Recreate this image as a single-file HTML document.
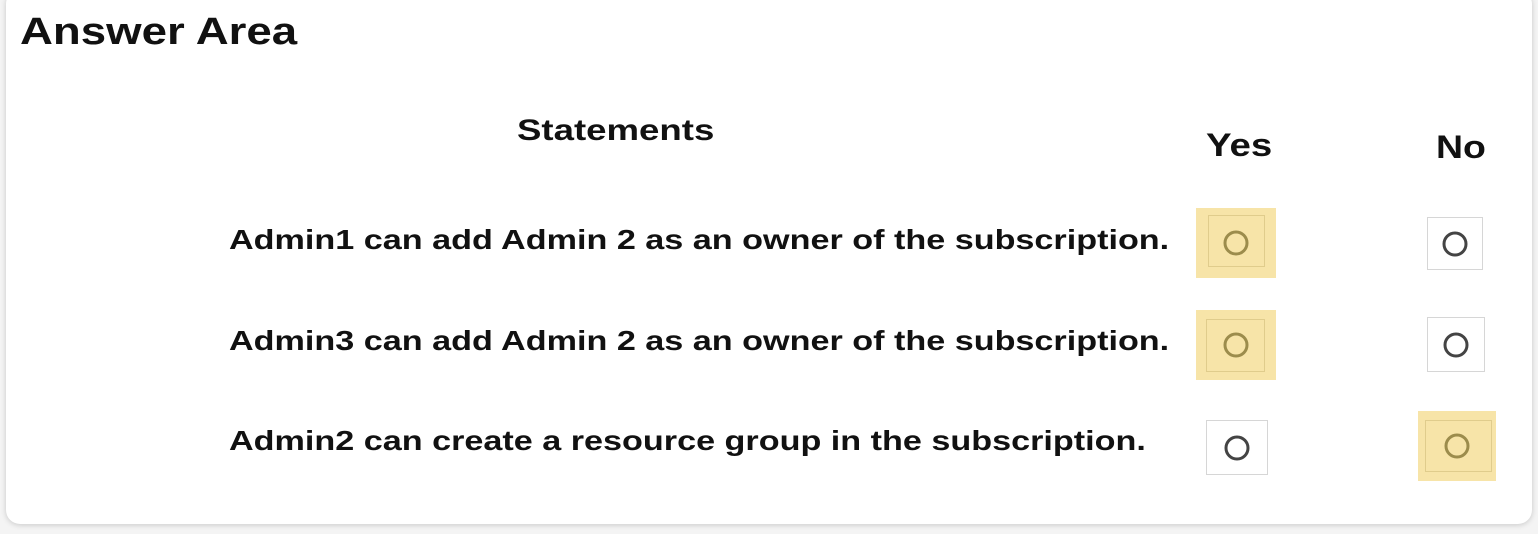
<!DOCTYPE html>
<html><head><style>
body{margin:0;width:1538px;height:534px;background:#f4f4f4;font-family:"Liberation Sans",Arial,sans-serif;overflow:hidden;position:relative}
.card{position:absolute;left:6px;top:-10px;width:1526px;height:534px;background:#fff;border-radius:14px;box-shadow:0 1px 6px rgba(0,0,0,.18)}
.t{position:absolute;font-weight:bold;color:#111;white-space:nowrap;transform-origin:left top}
.hl{position:absolute;background:#f7e4a8}
.box{position:absolute;border:1px solid #d6d6d6;background:#fff}
.hl .box{background:transparent;border-color:#e0cc8c}
.c{position:absolute;width:19px;height:19px;border:3px solid #444;border-radius:50%;left:50%;top:50%;transform:translate(-50%,-50%)}
.hl .c{border-color:#9c8c4c}
</style></head><body>
<div class="card"></div>
<div class="t" style="left:20px;top:11px;font-size:38px;transform:scaleX(1.2)">Answer Area</div>
<div class="t" style="left:517px;top:114px;font-size:30px;transform:scaleX(1.22)">Statements</div>
<div class="t" style="left:1206px;top:127px;font-size:32px;transform:scaleX(1.2)">Yes</div>
<div class="t" style="left:1436px;top:129px;font-size:32px;transform:scaleX(1.17)">No</div>
<div class="t" style="left:229px;top:224px;font-size:28px;transform:scaleX(1.22)">Admin1 can add Admin 2 as an owner of the subscription.</div>
<div class="t" style="left:229px;top:325px;font-size:28px;transform:scaleX(1.22)">Admin3 can add Admin 2 as an owner of the subscription.</div>
<div class="t" style="left:229px;top:425px;font-size:28px;transform:scaleX(1.22)">Admin2 can create a resource group in the subscription.</div>

<div class="hl" style="left:1196px;top:208px;width:80px;height:70px"><div class="box" style="left:12px;top:7px;width:55px;height:50px"></div><div class="c"></div></div>
<div class="box" style="left:1427px;top:217px;width:54px;height:51px"><div class="c"></div></div>

<div class="hl" style="left:1196px;top:310px;width:80px;height:70px"><div class="box" style="left:10px;top:9px;width:57px;height:51px"></div><div class="c"></div></div>
<div class="box" style="left:1427px;top:317px;width:56px;height:53px"><div class="c"></div></div>

<div class="box" style="left:1206px;top:420px;width:60px;height:53px"><div class="c"></div></div>
<div class="hl" style="left:1418px;top:411px;width:78px;height:70px"><div class="box" style="left:7px;top:9px;width:65px;height:50px"></div><div class="c"></div></div>
</body></html>
